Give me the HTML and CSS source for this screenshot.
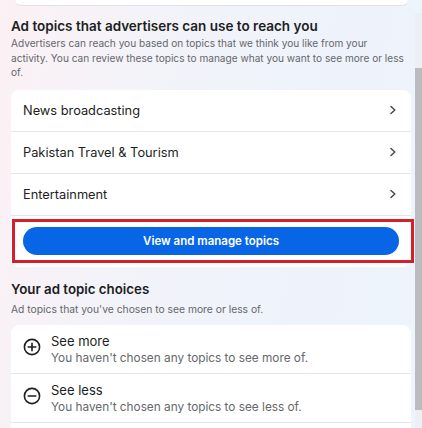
FILE: index.html
```html
<!DOCTYPE html>
<html>
<head>
<meta charset="utf-8">
<link rel="stylesheet" href="styles.css">
</head>
<body>
<div class="page">
  <main class="content">
    <div class="prev-card"></div>

    <section class="section">
      <h2 class="title">Ad topics that advertisers can use to reach you</h2>
      <p class="desc first-desc">Advertisers can reach you based on topics that we think you like from your<br>activity. You can review these topics to manage what you want to see more or less of.</p>
      <div class="card">
        <div class="row"><span class="row-label">News broadcasting</span><svg class="chev" viewBox="0 0 12 12"><path d="M4 2.5 L7.8 6 L4 9.5" /></svg></div>
        <div class="row"><span class="row-label">Pakistan Travel &amp; Tourism</span><svg class="chev" viewBox="0 0 12 12"><path d="M4 2.5 L7.8 6 L4 9.5" /></svg></div>
        <div class="row"><span class="row-label">Entertainment</span><svg class="chev" viewBox="0 0 12 12"><path d="M4 2.5 L7.8 6 L4 9.5" /></svg></div>
        <div class="btn-wrap">
          <button class="btn">View and manage topics</button>
          <div class="highlight"></div>
        </div>
      </div>
    </section>

    <section class="section second">
      <h2 class="title small">Your ad topic choices</h2>
      <p class="desc">Ad topics that you've chosen to see more or less of.</p>
      <div class="card">
        <div class="choice">
          <svg class="ico" viewBox="0 0 18 18"><circle cx="9" cy="9" r="7.6" /><path d="M9 5.2 V12.8 M5.2 9 H12.8" /></svg>
          <div class="choice-text">
            <div class="choice-title">See more</div>
            <div class="choice-sub">You haven't chosen any topics to see more of.</div>
          </div>
        </div>
        <div class="choice">
          <svg class="ico" viewBox="0 0 18 18"><circle cx="9" cy="9" r="7.6" /><path d="M5.2 9 H12.8" /></svg>
          <div class="choice-text">
            <div class="choice-title">See less</div>
            <div class="choice-sub">You haven't chosen any topics to see less of.</div>
          </div>
        </div>
        <div class="choice empty"></div>
      </div>
    </section>
  </main>
  <div class="scrollbar"><div class="thumb"></div></div>
</div>
</body>
</html>
```

FILE: styles.css
```css
html, body {
  margin: 0;
  padding: 0;
}
body {
  width: 422px;
  height: 428px;
  overflow: hidden;
  font-family: Inter, "Noto Sans", sans-serif;
  background: linear-gradient(100deg, #fcf1f4 0%, #f3f3f9 30%, #eef3fb 70%, #eef4fb 100%);
}
.page {
  display: flex;
  height: 428px;
  overflow: hidden;
}
.content {
  flex: 1;
  padding: 0 4px 0 11px;
  min-width: 0;
}
.prev-card {
  height: 5px;
  margin: 0 3px 0 4px;
  background: #fff;
  border-bottom: 1px solid #dfe1e6;
  border-radius: 0 0 8px 8px;
}
.section {
  margin-top: 11px;
}
.title {
  margin: 0;
  font-size: 13.5px;
  font-weight: 600;
  color: #1c1e21;
  line-height: 19px;
}
.title.small {
  font-size: 13.3px;
}
.desc {
  margin: 0;
  font-size: 10.3px;
  line-height: 14.5px;
  color: #65676b;
}
.first-desc {
  font-size: 10.1px;
  margin-right: -4px;
}
.card {
  margin-top: 10px;
  background: #fff;
  border-radius: 8px;
  position: relative;
}
.row {
  height: 41px;
  display: flex;
  align-items: center;
  justify-content: space-between;
  padding: 0 12px;
  border-bottom: 1px solid #e4e6eb;
}
.row-label {
  font-size: 12.8px;
  color: #1c1e21;
}
.chev {
  width: 12px;
  height: 12px;
  fill: none;
  stroke: #444950;
  stroke-width: 1.5;
  stroke-linecap: round;
  stroke-linejoin: round;
}
.btn-wrap {
  position: relative;
  padding: 11px 12px 12px;
}
.btn {
  display: block;
  width: 100%;
  height: 28px;
  border: none;
  border-radius: 14px;
  background: #0866e6;
  color: #fff;
  font-family: Inter, "Noto Sans", sans-serif;
  font-size: 11.5px;
  font-weight: 600;
}
.highlight {
  position: absolute;
  left: 1px;
  right: -3px;
  top: 3px;
  bottom: 4px;
  border: 3px solid #d51f2b;
}
.second {
  margin-top: 13px;
}
.second .desc {
  margin-top: 3px;
}
.second .card {
  margin-top: 9px;
}
.choice {
  display: flex;
  align-items: flex-start;
  padding: 8px 12px 7px;
  height: 33px;
  border-bottom: 1px solid #e4e6eb;
}
.choice.empty {
  border-bottom: none;
}
.ico {
  width: 18px;
  height: 18px;
  margin-top: 5px;
  margin-right: 10px;
  fill: none;
  stroke: #1c1e21;
  stroke-width: 1.6;
  stroke-linecap: round;
}
.choice-title {
  font-size: 13px;
  color: #1c1e21;
  line-height: 17px;
}
.choice-sub {
  font-size: 11.8px;
  color: #65676b;
  line-height: 17px;
}
.scrollbar {
  width: 7px;
  margin-top: 13px;
  background: #eceff4;
  position: relative;
}
.thumb {
  margin-top: 55px;
  height: 342px;
  background: #bcbcbf;
}
```
